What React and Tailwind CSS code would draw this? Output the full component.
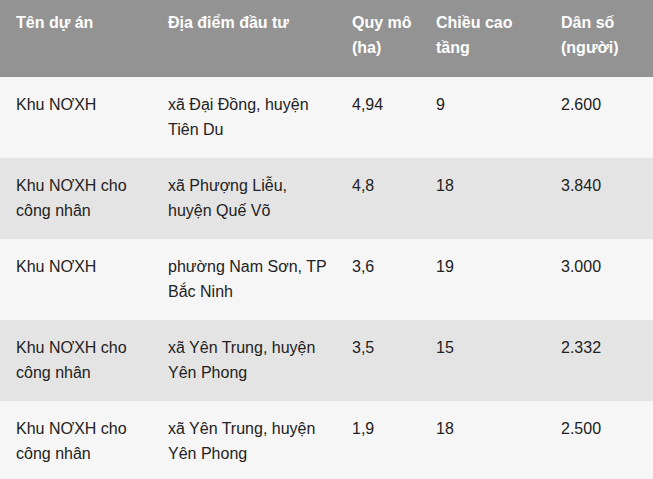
const head = ['Tên dự án', 'Địa điểm đầu tư', 'Quy mô (ha)', 'Chiều cao tầng', 'Dân số (người)'];

const rows = [
  ['Khu NƠXH', 'xã Đại Đồng, huyện Tiên Du', '4,94', '9', '2.600'],
  ['Khu NƠXH cho công nhân', 'xã Phượng Liễu, huyện Quế Võ', '4,8', '18', '3.840'],
  ['Khu NƠXH', 'phường Nam Sơn, TP Bắc Ninh', '3,6', '19', '3.000'],
  ['Khu NƠXH cho công nhân', 'xã Yên Trung, huyện Yên Phong', '3,5', '15', '2.332'],
  ['Khu NƠXH cho công nhân', 'xã Yên Trung, huyện Yên Phong', '1,9', '18', '2.500'],
];

const cols = 'grid grid-cols-[152px_184px_84px_125px_108px]';

export default function App() {
  return (
    <div className="w-[653px] h-[479px] overflow-hidden bg-white font-['Liberation_Sans',Arial,sans-serif] text-[16px] leading-[25px]">
      <div className={`${cols} h-[77px] bg-[#939393] text-white font-bold`}>
        {head.map((h) => (
          <div key={h} className="pl-4 pr-2 pt-[10px]">
            {h}
          </div>
        ))}
      </div>
      {rows.map((r, i) => (
        <div key={i} className={`${cols} h-[81px] text-[#222] ${i % 2 ? 'bg-[#e4e4e4]' : 'bg-[#f6f6f6]'}`}>
          {r.map((c, j) => (
            <div key={j} className="pl-4 pr-1 pt-[15px]">
              {c}
            </div>
          ))}
        </div>
      ))}
    </div>
  );
}
